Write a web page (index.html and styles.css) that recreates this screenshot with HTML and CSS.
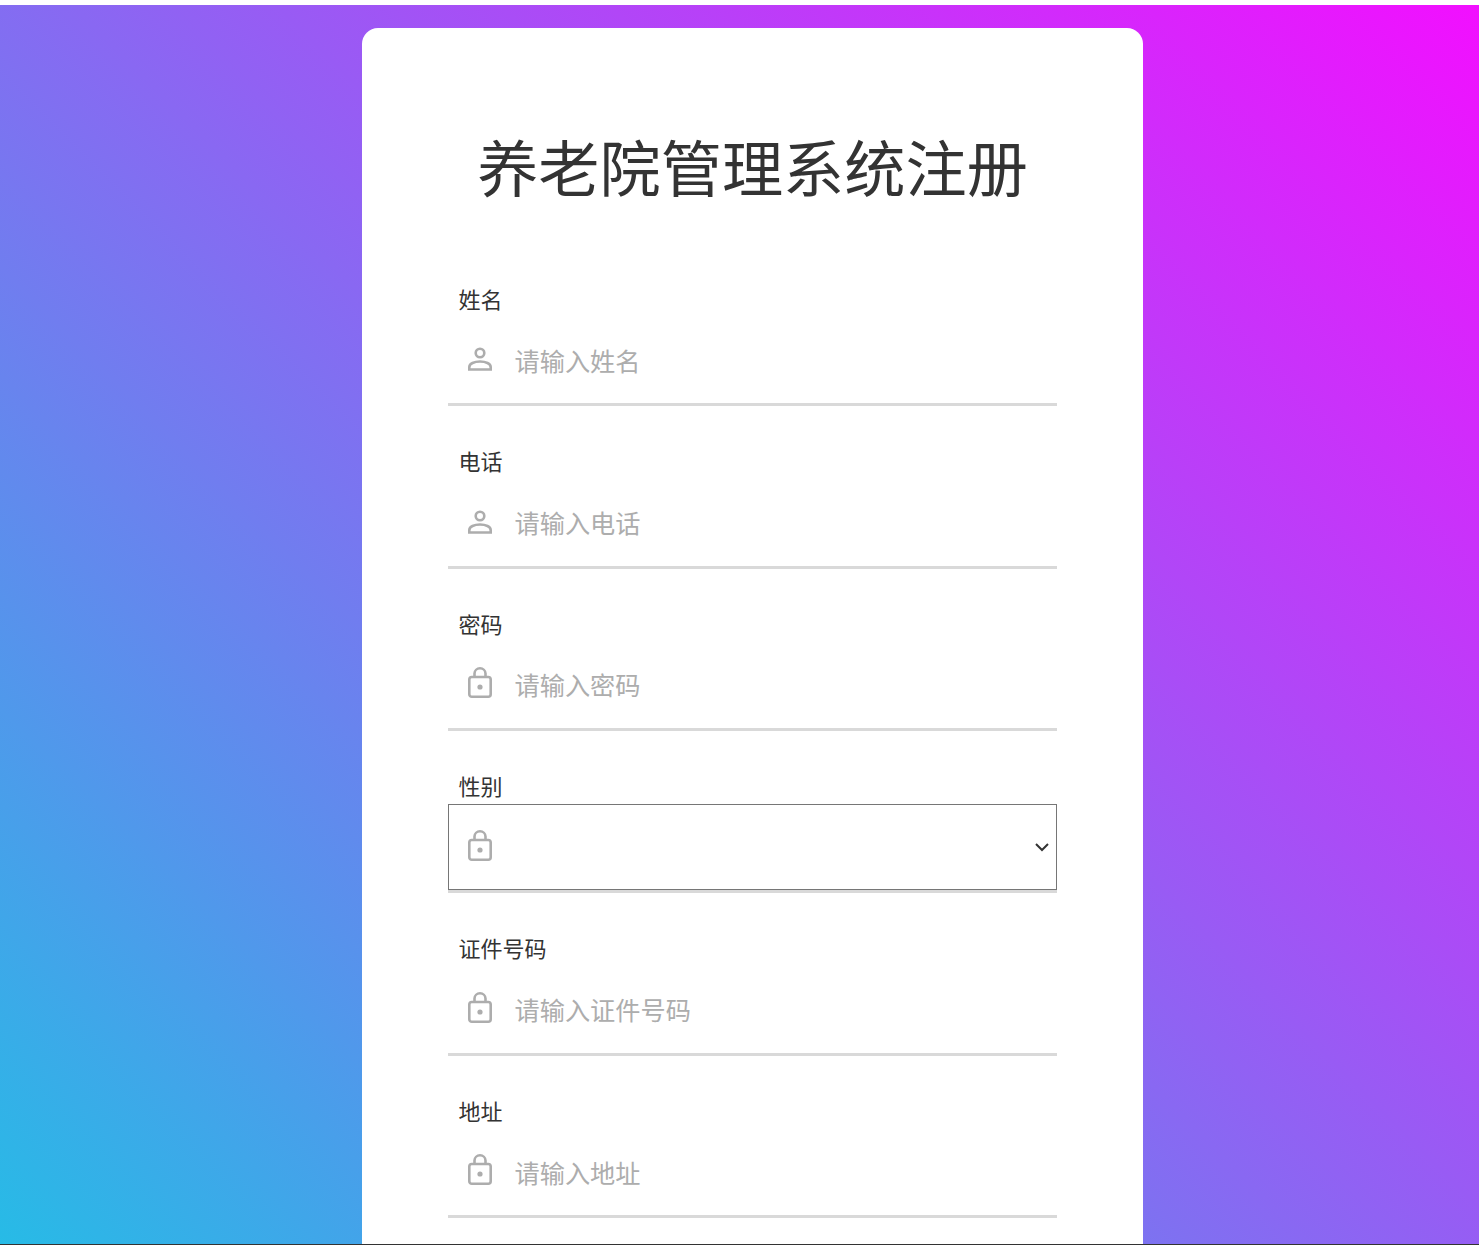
FILE: index.html
```html
<!DOCTYPE html>
<html>
<head>
    <title>养老院管理系统注册</title>
    <link rel="stylesheet" href="styles.css">
</head>
<body>
    <div class="page">
        <div class="card">
            <h1 class="title">养老院管理系统注册</h1>
            <div class="field">
                <div class="label">姓名</div>
                <div class="input-row">
                    <svg class="icon" viewBox="0 0 24 24"><circle cx="12" cy="6" r="4.300" /><path d="M1.300 22.500v-2.500c0-3.300 5-5.500 10.700-5.500s10.700 2.200 10.700 5.500v2.500z" /></svg>
                    <span class="placeholder">请输入姓名</span>
                </div>
            </div>
            <div class="field">
                <div class="label">电话</div>
                <div class="input-row">
                    <svg class="icon" viewBox="0 0 24 24"><circle cx="12" cy="6" r="4.300" /><path d="M1.300 22.500v-2.500c0-3.300 5-5.500 10.700-5.500s10.700 2.200 10.700 5.500v2.500z" /></svg>
                    <span class="placeholder">请输入电话</span>
                </div>
            </div>
            <div class="field">
                <div class="label">密码</div>
                <div class="input-row">
                    <svg class="icon icon-lock" viewBox="0 0 24 31"><rect x="1.300" y="10" width="21.400" height="19.700" rx="2.500" /><path d="M6.500 10V6.500a5.500 5.200 0 0 1 11 0V10" /><circle class="dot" cx="12" cy="20" r="2.600" /></svg>
                    <span class="placeholder">请输入密码</span>
                </div>
            </div>
            <div class="field">
                <div class="label">性别</div>
                <div class="input-row select-row">
                    <svg class="icon icon-lock" viewBox="0 0 24 31"><rect x="1.300" y="10" width="21.400" height="19.700" rx="2.500" /><path d="M6.500 10V6.500a5.500 5.200 0 0 1 11 0V10" /><circle class="dot" cx="12" cy="20" r="2.600" /></svg>
                    <svg class="chevron" viewBox="0 0 14 10"><path d="M1 2l6 6 6-6" /></svg>
                </div>
            </div>
            <div class="field">
                <div class="label">证件号码</div>
                <div class="input-row">
                    <svg class="icon icon-lock" viewBox="0 0 24 31"><rect x="1.300" y="10" width="21.400" height="19.700" rx="2.500" /><path d="M6.500 10V6.500a5.500 5.200 0 0 1 11 0V10" /><circle class="dot" cx="12" cy="20" r="2.600" /></svg>
                    <span class="placeholder">请输入证件号码</span>
                </div>
            </div>
            <div class="field">
                <div class="label">地址</div>
                <div class="input-row">
                    <svg class="icon icon-lock" viewBox="0 0 24 31"><rect x="1.300" y="10" width="21.400" height="19.700" rx="2.500" /><path d="M6.500 10V6.500a5.500 5.200 0 0 1 11 0V10" /><circle class="dot" cx="12" cy="20" r="2.600" /></svg>
                    <span class="placeholder">请输入地址</span>
                </div>
            </div>
        </div>
    </div>
</body>
</html>
```

FILE: styles.css
```css
html, body {
    margin: 0;
    height: 100%;
    overflow: hidden;
    background: #fff;
}
body {
    font-family: "Noto Sans CJK SC", "Liberation Sans", sans-serif;
    box-sizing: border-box;
    padding-top: 5px;
    border-bottom: 1px solid #333;
}
.page {
    height: 100%;
    overflow: hidden;
    display: flex;
    justify-content: center;
    padding-top: 23px;
    box-sizing: border-box;
    background: linear-gradient(45deg, #27bbe6, #f20fff);
}
.card {
    width: 781px;
    height: 1400px;
    flex-shrink: 0;
    margin-left: 26px;
    background: #fff;
    border-radius: 16px;
    padding: 99px 86px 0;
    box-sizing: border-box;
}
.title {
    margin: 0 0 76.800px;
    font-size: 61.200px;
    line-height: 78px;
    font-weight: 400;
    color: #333;
    text-align: center;
}
.field {
    border-bottom: 3px solid #d9d9d9;
    margin-bottom: 38px;
}
.label {
    padding-left: 10.500px;
    padding-bottom: 1.800px;
    font-size: 22px;
    line-height: 33.600px;
    color: #333;
}
.input-row {
    height: 86px;
    display: flex;
    align-items: center;
    box-sizing: border-box;
    padding-left: 20px;
    padding-bottom: 1px;
}
.icon {
    width: 24px;
    height: 24px;
    fill: none;
    stroke: #adadad;
    stroke-width: 2.600;
    flex-shrink: 0;
    margin-bottom: 1px;
}
.icon-lock {
    height: 31px;
    margin-bottom: 4px;
}
.dot {
    fill: #adadad;
    stroke: none;
}
.placeholder {
    margin-left: 22.500px;
    font-size: 25.200px;
    color: #adadad;
}
.select-row {
    justify-content: space-between;
    border: 1px solid #767676;
    padding-left: 19px;
    padding-right: 7px;
    padding-bottom: 0;
}
.chevron {
    width: 14px;
    height: 10px;
    fill: none;
    stroke: #333;
    stroke-width: 2;
}
```
